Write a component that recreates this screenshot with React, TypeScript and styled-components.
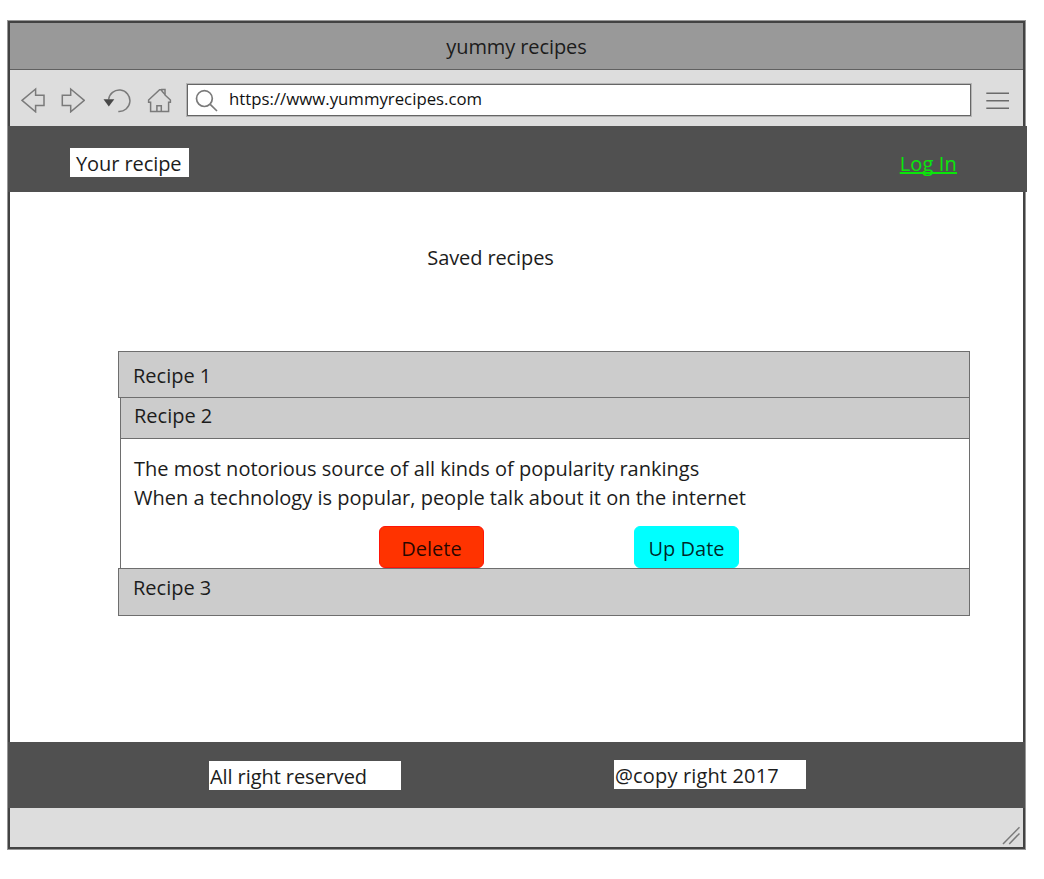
import React from 'react';
import styled, { createGlobalStyle } from 'styled-components';

const GlobalStyle = createGlobalStyle`
  body {
    margin: 0;
    background: #fff;
    color: #1c1c1c;
    font: 20px/28px "Open Sans", "Noto Sans", sans-serif;
  }
  * { box-sizing: border-box; }
`;

const Page = styled.div`
  padding: 21px 0 30px 8px;
`;

const BrowserFrame = styled.div`
  display: flex;
  flex-direction: column;
  width: 1017px;
  height: 828px;
  border: 2px solid #434343;
  box-shadow: 0 0 0 1px #979797;
`;

const TitleBar = styled.div`
  height: 47px;
  padding-top: 10px;
  background: #999;
  border-bottom: 1px solid #606060;
  text-align: center;
  letter-spacing: -0.1px;
`;

const Toolbar = styled.div`
  display: flex;
  align-items: flex-start;
  height: 56px;
  padding: 14px 13px 0 11px;
  background: #ddd;
`;

const NavIcons = styled.div`
  display: flex;
  justify-content: space-between;
  padding: 3px 15px 0 0;
  width: 166px;
`;

const Icon = styled.svg`
  flex: none;
  display: block;
  fill: none;
  stroke: #7a7a7a;
  stroke-width: 1.5;
`;

const AddressBox = styled.div`
  display: flex;
  align-items: flex-start;
  width: 784px;
  height: 32px;
  background: #fff;
  border: 1px solid #666;
  box-shadow: 0 0 0 1px #b5b5b5;
`;

const SearchIcon = styled(Icon)`
  margin: 3px 11px 0 6px;
  stroke-width: 1.7;
`;

const Url = styled.span`
  font-size: 16.8px;
  line-height: 28px;
  color: #111;
`;

const MenuIcon = styled(Icon)`
  margin: 8px 0 0 15px;
  stroke: #6b6b6b;
`;

const SiteHeader = styled.header`
  display: flex;
  justify-content: space-between;
  align-items: flex-start;
  flex: none;
  height: 66px;
  margin: 0 -4px 0 -2px;
  padding: 22px 70px 0 62px;
  background: #505050;
`;

const Label = styled.div<{ $width: number; $inset?: number; $spacing?: number }>`
  width: ${(p) => p.$width}px;
  height: 29px;
  padding: 2px 0 0 ${(p) => p.$inset ?? 1}px;
  background: #fff;
  letter-spacing: ${(p) => p.$spacing ?? -0.08}px;
  line-height: 27px;
  white-space: nowrap;
`;

const LoginLink = styled.a`
  margin-top: 2px;
  color: #0ae60a;
  text-decoration: underline;
  text-decoration-thickness: 1.5px;
  text-underline-offset: 1px;
  text-decoration-skip-ink: none;
  line-height: 27px;
  letter-spacing: 0.15px;
`;

const Main = styled.main`
  flex: 1;
  padding: 52px 53px 0 108px;
`;

const Heading = styled.h1`
  margin: 0 0 79px;
  padding-right: 107px;
  font: inherit;
  text-align: center;
  letter-spacing: -0.1px;
`;

const RecipeBar = styled.div<{ $height: number; $top: number; $nested?: boolean }>`
  height: ${(p) => p.$height}px;
  margin-left: ${(p) => (p.$nested ? 2 : 0)}px;
  padding: ${(p) => p.$top}px 0 0 ${(p) => (p.$nested ? 13 : 14)}px;
  background: #ccc;
  border: 1px solid #6e6e6e;
  border-top-width: ${(p) => (p.$nested ? 0 : 1)}px;
`;

const RecipeBody = styled.div`
  height: 129px;
  margin-left: 2px;
  padding: 16px 0 0 13px;
  border: 1px solid #6e6e6e;
  border-width: 0 1px;
`;

const Description = styled.p`
  margin: 0;
  line-height: 28.5px;
`;

const Actions = styled.div`
  display: flex;
  gap: 150px;
  margin: 14px 0 0 245px;
`;

const ActionButton = styled.button<{ $fill: string; $edge: string }>`
  width: 105px;
  height: 42px;
  padding: 4px 0 0;
  border: 1.5px solid ${(p) => p.$edge};
  border-radius: 6px;
  background: ${(p) => p.$fill};
  color: rgba(0, 0, 0, 0.85);
  font: inherit;
`;

const SiteFooter = styled.footer`
  display: flex;
  gap: 213px;
  flex: none;
  height: 66px;
  margin: 0 -2px;
  padding: 18px 0 0 201px;
  background: #505050;

  ${Label}:first-child { margin-top: 1px; }
`;

const StatusBar = styled.div`
  display: flex;
  justify-content: flex-end;
  align-items: flex-end;
  flex: none;
  height: 39px;
  padding: 0 3px 2px 0;
  background: #ddd;
`;

export default function App() {
  return (
    <Page>
      <GlobalStyle />
      <BrowserFrame>
        <TitleBar>yummy recipes</TitleBar>
        <Toolbar>
          <NavIcons>
            <Icon width="24" height="26" viewBox="21 87 24 26">
              <path d="M22 100.3 35.6 89v6.2H44V105.6h-8.4v6.2Z" />
            </Icon>
            <Icon width="24" height="26" viewBox="60 87 24 26">
              <path d="M83.3 100.3 69.7 89v6.2h-8.4v10.4h8.4v6.2Z" />
            </Icon>
            <Icon width="29" height="26" viewBox="103 87 29 26">
              <path d="M109.6 99.5A10.7 10.7 0 1 1 119.3 111.4" />
              <path d="M104.5 99.3h10.8L109.8 106.4Z" fill="#484848" stroke="none" />
            </Icon>
            <Icon width="25" height="26" viewBox="147 87 25 26">
              <path d="M150.6 111.4V102.2H148.6V100L159.6 89.8H161.2L161.8 91V89.6H165V95L170.4 100V102.2H168.6V111.4Z" />
              <path d="M161.8 91 165 94.6M156.9 111.4V105.8H161.3V111.4" />
            </Icon>
          </NavIcons>
          <AddressBox>
            <SearchIcon width="24" height="25" viewBox="194 87 24 25">
              <circle cx="204.4" cy="97.6" r="7.9" />
              <path d="M210.2 103.4 217 110" />
            </SearchIcon>
            <Url>https://www.yummyrecipes.com</Url>
          </AddressBox>
          <MenuIcon width="23" height="18" viewBox="0 0 23 18">
            <path d="M.3 1.3H23M.3 8.7H23M.3 16.2H23" />
          </MenuIcon>
        </Toolbar>
        <SiteHeader>
          <Label $width={119} $inset={6}>Your recipe</Label>
          <LoginLink>Log In</LoginLink>
        </SiteHeader>
        <Main>
          <Heading>Saved recipes</Heading>
          <RecipeBar $height={47} $top={10}>Recipe 1</RecipeBar>
          <RecipeBar $height={41} $top={4} $nested>Recipe 2</RecipeBar>
          <RecipeBody>
            <Description>
              The most notorious source of all kinds of popularity rankings
              <br />
              When a technology is popular, people talk about it on the internet
            </Description>
            <Actions>
              <ActionButton $fill="#ff3300" $edge="#ff1408">Delete</ActionButton>
              <ActionButton $fill="#00ffff" $edge="#00ffff">Up Date</ActionButton>
            </Actions>
          </RecipeBody>
          <RecipeBar $height={48} $top={5}>Recipe 3</RecipeBar>
        </Main>
        <SiteFooter>
          <Label $width={192}>All right reserved</Label>
          <Label $width={192} $spacing={0.15}>@copy right 2017</Label>
        </SiteFooter>
        <StatusBar>
          <Icon width="18" height="19" viewBox="1002 826 18 19">
            <path d="M1003 844 1019.5 827.2M1009.2 844 1019.5 833.4" />
          </Icon>
        </StatusBar>
      </BrowserFrame>
    </Page>
  );
}
